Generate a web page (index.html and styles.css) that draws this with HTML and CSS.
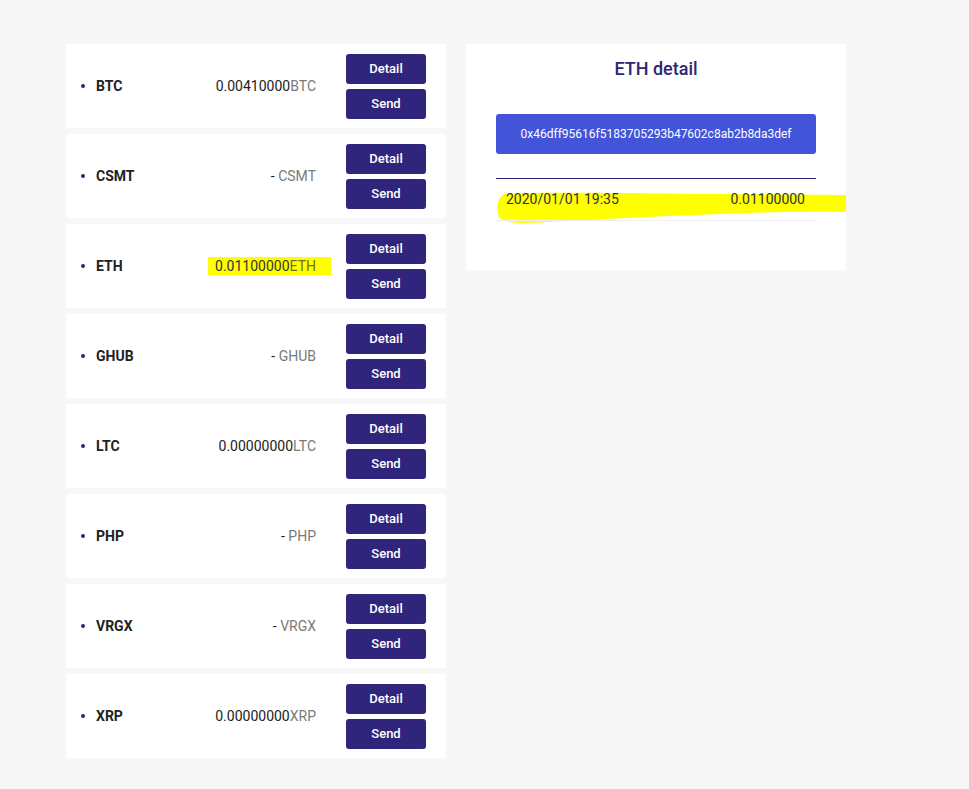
FILE: index.html
```html
<!DOCTYPE html>
<html>
<head>
<meta charset="utf-8">
<link rel="stylesheet" href="styles.css">
</head>
<body>
<div class="layout">
  <ul class="wallets">
    <li class="card"><span class="dot"></span><span class="name">BTC</span><span class="amount">0.00410000<span class="cur">BTC</span></span><div class="actions"><button class="btn">Detail</button><button class="btn">Send</button></div></li>
    <li class="card"><span class="dot"></span><span class="name">CSMT</span><span class="amount">- <span class="cur">CSMT</span></span><div class="actions"><button class="btn">Detail</button><button class="btn">Send</button></div></li>
    <li class="card"><span class="dot"></span><span class="name">ETH</span><span class="amount"><span class="hl">0.01100000<span class="cur">ETH</span></span></span><div class="actions"><button class="btn">Detail</button><button class="btn">Send</button></div></li>
    <li class="card"><span class="dot"></span><span class="name">GHUB</span><span class="amount">- <span class="cur">GHUB</span></span><div class="actions"><button class="btn">Detail</button><button class="btn">Send</button></div></li>
    <li class="card"><span class="dot"></span><span class="name">LTC</span><span class="amount">0.00000000<span class="cur">LTC</span></span><div class="actions"><button class="btn">Detail</button><button class="btn">Send</button></div></li>
    <li class="card"><span class="dot"></span><span class="name">PHP</span><span class="amount">- <span class="cur">PHP</span></span><div class="actions"><button class="btn">Detail</button><button class="btn">Send</button></div></li>
    <li class="card"><span class="dot"></span><span class="name">VRGX</span><span class="amount">- <span class="cur">VRGX</span></span><div class="actions"><button class="btn">Detail</button><button class="btn">Send</button></div></li>
    <li class="card"><span class="dot"></span><span class="name">XRP</span><span class="amount">0.00000000<span class="cur">XRP</span></span><div class="actions"><button class="btn">Detail</button><button class="btn">Send</button></div></li>
  </ul>
  <section class="detail">
    <svg class="stroke" width="352" height="34" viewBox="0 0 352 34"><path d="M8 2 C 40 0, 120 1, 200 2 C 260 2, 320 3, 350 3 L 350 20 C 300 19, 250 21, 200 23 C 140 25, 100 28, 50 30 C 25 32, 8 31, 3 25 C 0 17, 1 6, 8 2 Z" fill="#ffff00"/></svg>
    <h2 class="title">ETH detail</h2>
    <button class="address">0x46dff95616f5183705293b47602c8ab2b8da3def</button>
    <div class="history">
      <div class="row"><span>2020/01/01 19:35</span><span>0.01100000</span></div>
    </div>
  </section>
</div>
</body>
</html>
```
FILE: styles.css
```css
* { box-sizing: border-box; }
body {
  margin: 0;
  padding: 44px 0 0 66px;
  background: #f7f7f7;
  font-family: Roboto, "Liberation Sans", sans-serif;
  color: #222;
}
.layout {
  display: flex;
  align-items: flex-start;
  gap: 20px;
}
.wallets {
  list-style: none;
  margin: 0;
  padding: 0;
  width: 380px;
  display: flex;
  flex-direction: column;
  gap: 6px;
}
.card {
  background: #fff;
  height: 84px;
  display: flex;
  align-items: center;
  padding: 0 20px 0 15px;
}
.dot {
  width: 4px;
  height: 4px;
  border-radius: 50%;
  background: #2e2674;
  margin-right: 11px;
}
.name {
  font-weight: 700;
  font-size: 14px;
  color: #222;
  flex: 1;
  margin-top: -1px;
}
.amount {
  font-size: 14px;
  color: #222;
  margin-right: 30px;
  margin-top: -1px;
}
.cur { color: #7a7a7a; }
.hl {
  display: inline-block;
  background: #ffff00;
  padding: 0 15px 0 7px;
  margin-right: -15px;
  line-height: 18px;
  color: #333;
}
.hl .cur { color: #6f6f2a; }
.actions {
  display: flex;
  flex-direction: column;
  gap: 5px;
}
.btn {
  width: 80px;
  height: 30px;
  border: none;
  border-radius: 3px;
  background: #30257d;
  color: #fff;
  font-family: Roboto, "Liberation Sans", sans-serif;
  font-size: 13px;
  font-weight: 500;
  padding: 0 0 1px;
}
.detail {
  position: relative;
  width: 380px;
  height: 226px;
  background: #fff;
  padding: 14px 30px 0;
}
.stroke {
  position: absolute;
  left: 30px;
  top: 148px;
}
.title {
  margin: 0;
  text-align: center;
  font-size: 18px;
  font-weight: 500;
  line-height: 22px;
  color: #2e2674;
}
.address {
  display: block;
  width: 320px;
  height: 40px;
  margin-top: 34px;
  border: none;
  border-radius: 3px;
  background: #4454d8;
  color: #fff;
  font-family: Roboto, "Liberation Sans", sans-serif;
  font-size: 12px;
  padding: 0;
}
.history {
  position: relative;
  margin-top: 24px;
  border-top: 1px solid #2e2674;
}
.row {
  display: flex;
  justify-content: space-between;
  align-items: center;
  height: 42px;
  padding: 0 11px 2px 10px;
  border-bottom: 1px solid #eeeeee;
  font-size: 14px;
  color: #333;
}
```
